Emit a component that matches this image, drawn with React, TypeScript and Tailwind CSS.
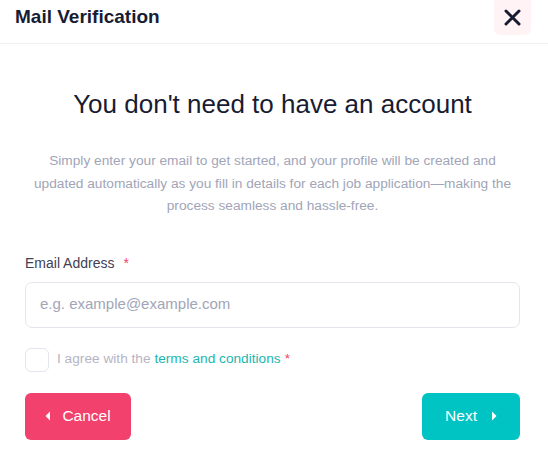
import React from "react";

export default function App() {
  return (
    <div className="w-[548px] h-[460px] bg-white overflow-hidden" style={{ fontFamily: '"Liberation Sans", Arial, sans-serif' }}>
      <div className="h-[44px] border-b border-[#eff2f5] flex items-start justify-between pl-[15px] pr-[17px]">
        <div className="h-[35px] flex items-center text-[19px] font-bold text-[#181c32]">Mail Verification</div>
        <button className="w-[37px] h-[35px] bg-[#fff3f5] rounded-b-[6px] flex items-center justify-center">
          <svg width="17" height="17" viewBox="0 0 17 17">
            <path d="M2 2L15 15M15 2L2 15" stroke="#181c32" strokeWidth="3" strokeLinecap="round" />
          </svg>
        </button>
      </div>
      <div className="pl-[25px] pr-[28px]">
        <h1 className="mt-[43px] text-center text-[26px] leading-[34px] text-[#181c32]">You don't need to have an account</h1>
        <p className="mt-[29px] text-center text-[13.7px] leading-[22.5px] text-[#a1a5b7]">
          Simply enter your email to get started, and your profile will be created and updated automatically as you fill in details for each job application—making the process seamless and hassle-free.
        </p>
        <div className="mt-[35px] text-[14px] leading-[20px] text-[#3f4254]">
          Email Address <span className="text-[#f1416c] ml-[5px]">*</span>
        </div>
        <div className="mt-[9px] h-[46px] border border-[#e4e6ef] rounded-[7px] flex items-center px-[14px] text-[15px] text-[#a1a5b7]">
          e.g. example@example.com
        </div>
        <div className="mt-[20px] flex items-center gap-[8px]">
          <div className="w-[24px] h-[24px] border border-[#e4e6ef] rounded-[6px]" />
          <div className="text-[13.7px] text-[#b5b5c3]">
            I agree with the <span className="text-[#1bb6b0]">terms and conditions</span>
            <span className="text-[#f1416c] ml-[4px]">*</span>
          </div>
        </div>
        <div className="mt-[21px] flex justify-between">
          <button className="w-[106px] h-[47px] rounded-[6px] bg-[#f1416c] text-white text-[15.5px] flex items-center justify-center gap-[11px]">
            <svg width="6" height="10" viewBox="0 0 6 10"><path d="M5 0.5L0.5 5L5 9.5Z" fill="white" /></svg>
            Cancel
          </button>
          <button className="w-[98px] h-[47px] rounded-[6px] bg-[#00c3c3] text-white text-[15.5px] flex items-center justify-center gap-[14px]">
            Next
            <svg width="6" height="10" viewBox="0 0 6 10"><path d="M1 0.5L5.5 5L1 9.5Z" fill="white" /></svg>
          </button>
        </div>
      </div>
    </div>
  );
}
